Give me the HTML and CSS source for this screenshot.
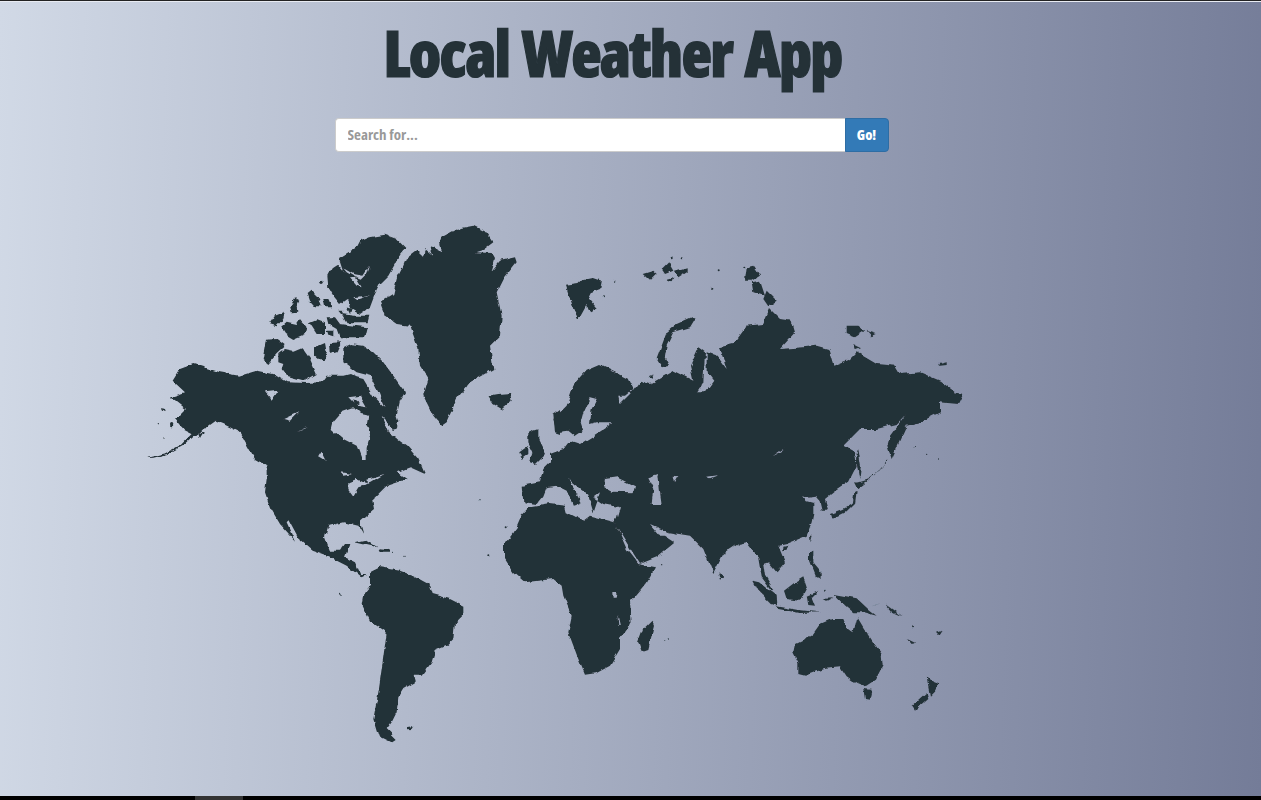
FILE: index.html
```html
<!DOCTYPE html>
<html lang="en">
<head>
<meta charset="utf-8">
<title>Local Weather App</title>
<link rel="stylesheet" href="styles.css">
</head>
<body>
<main class="page">
  <h1 class="title">Local Weather App</h1>
  <form class="search">
    <input class="search-input" type="text" placeholder="Search for...">
    <button class="search-btn" type="button">Go!</button>
  </form>
  <svg class="map" viewBox="130 220 900 530" aria-hidden="true">
    <defs>
      <filter id="rough" x="0" y="0" width="100%" height="100%" filterUnits="objectBoundingBox">
        <feTurbulence type="fractalNoise" baseFrequency="0.11" numOctaves="3" seed="4" result="n"/>
        <feDisplacementMap in="SourceGraphic" in2="n" scale="5" xChannelSelector="R" yChannelSelector="G"/>
      </filter>
    </defs>
    <g filter="url(#rough)">
    <rect x="130" y="220" width="900" height="530" fill="none"/>
    <g class="land" transform="translate(140 220) scale(.33333)">
      <path fill-rule="evenodd" d="M797,88L775,115 765,135 745,170 720,195 705,225 690,265 660,285 635,270 620,240 600,255 580,230 565,205 562,170 575,145 590,135 610,160 597,120 630,100 655,85 665,65 690,55 735,47 770,60Z M610,148L640,165 670,170 690,140 682,165 665,182 640,172 620,160Z M630,178L648,176 665,205 650,200Z M640,235L690,228 650,242Z"/>
      <path d="M800,115L830,92 850,112 855,90 880,110 870,85 905,100 900,70 905,55 950,30 1000,20 1040,40 1060,70 1030,92 1005,100 1055,102 1065,120 1055,155 1080,125 1125,115 1130,130 1090,180 1070,220 1085,290 1080,350 1050,380 1060,450 990,490 950,540 920,610 905,620 880,590 850,530 865,480 840,440 835,390 810,320 770,315 735,290 720,250 760,225 770,180 790,140Z"/>
      <path d="M388,315L405,290 435,278 430,300 410,322Z"/>
      <path d="M422,325L440,308 470,315 480,300 500,325 495,345 460,360 435,345Z"/>
      <path d="M450,262L465,238 478,245 470,262 472,278 455,280Z"/>
      <path d="M503,225L515,215 535,235 545,262 525,262 510,245Z"/>
      <path d="M550,240L565,240 575,262 555,262Z"/>
      <path d="M507,310L530,300 555,310 555,345 530,345Z"/>
      <path d="M560,295L585,295 600,315 680,325 672,358 600,358 590,330 565,315Z"/>
      <path d="M605,285L640,290 685,290 680,310 620,310Z"/>
      <path d="M620,265L640,270 630,285Z"/>
      <path d="M595,275L610,275 605,287Z"/>
      <path d="M560,335L580,335 580,355 565,350Z"/>
      <path d="M378,362L410,360 437,380 410,405 385,435 368,420Z"/>
      <path d="M415,405L435,390 460,395 485,385 510,420 530,465 495,485 440,470 425,450 430,435 415,430Z"/>
      <path d="M525,385L555,372 560,400 550,430 525,410Z"/>
      <path d="M570,372L603,370 590,400 572,405Z"/>
      <path d="M610,385L630,375 670,380 700,400 730,430 760,470 795,520 780,545 770,590 740,580 715,520 690,470 650,460 610,430Z"/>
      <path d="M1045,530L1075,525 1110,522 1115,545 1085,570 1060,555Z"/>
      <path d="M1138,700L1165,680 1165,705 1145,720Z"/>
      <path d="M1165,640L1195,630 1195,665 1215,705 1185,735 1170,730 1180,700 1165,670Z"/>
      <path d="M1240,585L1260,570 1260,645 1245,640Z"/>
      <path d="M60,567L78,570 80,577 63,572Z"/>
      <path fill-rule="evenodd" d="M120,450L160,435 240,460 300,470 350,455 400,465 440,490 500,492 545,490 560,470 590,470 610,470 630,465 650,475 670,480 700,530 730,560 770,590 775,605 770,632 755,636 745,610 725,590 745,640 800,680 835,720 855,765 810,745 770,760 800,780 740,800 730,810 700,840 705,870 660,910 670,945 655,920 610,910 565,920 555,955 570,995 600,995 615,975 628,975 615,1015 645,1030 660,1065 685,1065 660,1072 620,1040 570,1015 515,995 480,965 445,900 438,905 465,965 420,915 390,865 375,820 380,780 380,740 345,720 300,640 250,615 225,605 190,630 170,650 130,630 105,600 135,570 90,535 135,520 98,485Z M610,575L640,565 660,585 685,590 680,620 690,645 680,690 680,720 665,720 650,680 610,660 575,630 580,610Z M375,520L415,515 395,545 385,530Z M430,600L475,580 450,605Z M625,790L650,780 670,790 690,795 655,805 640,830 625,810Z M470,635L500,625 490,630Z M545,695L560,725 535,710Z M600,760L640,765 610,770Z M680,780L730,765 680,795Z M625,535L660,530 680,565 650,560Z"/>
      <path d="M640,540L660,555 645,565Z"/>
      <path d="M190,625L215,605 195,630Z"/>
      <path d="M175,645L192,640 180,660Z"/>
      <path d="M18,717L40,712 80,702 120,680 160,640 170,645 130,680 85,705 40,716Z"/>
      <circle cx="55" cy="611" r="2"/><circle cx="95" cy="617" r="5"/><circle cx="72" cy="657" r="2"/><circle cx="543" cy="190" r="5"/>
    </g>
    <g class="land" transform="translate(550 250) scale(.33333)">
      <path fill-rule="evenodd" d="M0,615L40,600 45,595 60,575 90,585 130,560 175,530 190,520 140,520 120,525 125,480 140,450 120,445 100,490 92,520 100,545 75,562 55,545 20,550 10,510 50,470 70,410 110,365 150,348 185,365 235,390 250,420 225,440 205,440 210,465 240,435 270,395 300,405 370,365 400,380 430,395 420,350 445,295 465,310 460,400 440,430 465,430 490,395 470,370 470,310 500,320 530,360 510,295 550,285 590,230 640,225 660,180 690,210 725,215 735,250 690,300 760,295 800,290 835,300 850,350 900,330 920,310 980,345 1035,350 1050,375 1110,370 1170,395 1215,430 1240,435 1225,465 1170,460 1170,490 1110,520 1070,530 1025,630 1012,590 1020,560 1068,495 1040,525 980,540 930,540 880,590 915,610 920,650 895,700 850,730 825,750 835,785 815,785 808,755 795,740 760,745 770,760 790,765 790,795 785,820 770,860 710,885 685,890 705,940 680,970 655,940 640,945 645,980 670,1020 665,1025 635,985 625,925 590,880 565,885 520,915 490,975 460,900 440,880 420,860 355,850 300,825 330,860 345,860 375,880 320,925 270,945 195,825 210,775 160,765 130,745 150,730 130,790 115,740 55,690 95,760 70,770 50,725 20,710 -10,715 -20,740 -40,765 -80,760 -85,710 -30,700 -20,660 0,640Z M160,715L165,690 200,685 255,712 250,730 185,728Z M292,685L325,675 330,730 335,765 305,765 310,720Z M665,625L700,600 708,585 695,610Z M368,680L382,682 372,700Z M468,683L505,678 480,688Z"/>
      <path d="M425,205L435,210 420,235 370,250 350,290 345,320 360,350 335,355 320,330 335,290 350,250 380,225Z"/>
      <path d="M590,55L610,50 630,80 605,95 585,95Z"/>
      <path d="M605,100L630,95 645,140 610,130Z"/>
      <path d="M650,125L680,155 655,172 640,150Z"/>
      <path d="M890,230L925,230 945,245 915,265 890,255Z"/>
      <path d="M950,245L980,255 965,262Z"/>
      <path d="M910,285L930,295 915,300Z"/>
      <path d="M1168,345L1190,340 1190,348 1170,350Z"/>
      <path d="M48,110L85,105 100,90 125,85 155,95 150,120 125,130 115,150 140,180 120,190 110,165 85,210 70,180 60,150Z"/>
      <path d="M278,75L310,65 320,75 300,95Z"/>
      <path d="M335,60L355,40 370,65 345,75Z"/>
      <path d="M375,65L410,55 410,68 385,85Z"/>
      <path d="M350,90L370,85 365,97Z"/>
      <path d="M925,600L933,650 928,690 920,640Z"/>
      <path d="M915,700L945,705 925,720Z"/>
      <circle cx="193" cy="95" r="3"/><circle cx="365" cy="25" r="3"/><circle cx="395" cy="31" r="3"/><circle cx="506" cy="64" r="3"/><circle cx="487" cy="116" r="3"/><circle cx="580" cy="53" r="3"/><circle cx="303" cy="385" r="6"/><circle cx="272" cy="405" r="6"/><circle cx="162" cy="142" r="3"/><circle cx="1090" cy="592" r="2"/><circle cx="1130" cy="616" r="2"/><circle cx="1165" cy="627" r="2"/>
      <path d="M930,715L1015,635" fill="none" stroke="#243137" stroke-width="3" stroke-dasharray="8 4"/>
    </g>
    <g class="land" transform="translate(250 480) scale(.33333)">
      <path fill-rule="evenodd" d="M840,85L900,75 945,80 950,100 1000,125 1020,110 1095,130 1130,210 1165,255 1215,265 1190,310 1140,370 1145,430 1110,480 1110,510 1080,560 1040,582 1005,587 985,540 955,460 965,410 940,350 935,320 910,300 825,310 790,280 765,240 765,190 800,145 815,110Z M1087,342L1103,342 1100,356 1088,356Z M1102,405L1110,440 1105,440Z"/>
      <path d="M1205,425L1212,440 1195,510 1175,517 1165,490 1180,450Z"/>
      <path d="M360,280L390,265 450,275 490,290 535,315 545,345 600,360 640,380 640,405 615,430 610,480 590,500 555,515 545,550 515,590 490,590 495,610 460,630 445,655 440,700 425,730 410,750 440,780 425,790 385,770 370,720 385,640 395,570 410,460 360,425 335,375 340,345 360,320Z"/>
      <path d="M315,190L345,183 380,205 350,198Z"/>
      <path d="M385,208L415,210 420,218 390,218Z"/>
      <path d="M468,745L490,741 485,750 470,751Z"/>
      <circle cx="270" cy="344" r="3"/><circle cx="715" cy="232" r="3"/><circle cx="770" cy="145" r="3"/><circle cx="690" cy="62" r="2"/><circle cx="430" cy="220" r="2"/><circle cx="462" cy="232" r="2"/>
    </g>
    <g class="land" transform="translate(640 480) scale(.33333)">
      <path d="M340,305L360,310 410,350 412,380 395,375 355,335Z"/>
      <path d="M410,382L470,392 540,400 480,402 415,390Z"/>
      <path d="M432,335L465,310 490,295 500,325 480,365 440,360Z"/>
      <path d="M500,350L535,335 515,355 525,380 505,378Z"/>
      <path d="M580,345L610,350 650,358 690,395 710,410 670,400 640,400 610,375Z"/>
      <path d="M507,220L520,215 520,250 545,280 545,300 525,290 507,245Z"/>
      <path d="M510,170L518,170 512,190Z"/>
      <path d="M575,122L570,105 610,90 635,75 640,40 650,35 645,75 620,100Z"/>
      <path d="M650,12L690,0 670,15 655,30Z"/>
      <path d="M240,278L250,295 240,302 236,290Z"/>
      <path d="M430,203L444,200 440,215 430,217Z"/>
      <path d="M465,495L515,470 540,435 575,420 610,420 620,445 640,460 652,415 670,445 700,490 725,525 728,560 705,605 675,625 650,615 620,595 600,565 550,570 495,590 475,585 475,550 460,520Z"/>
      <path d="M670,630L695,632 688,662 675,660Z"/>
      <path d="M860,590L880,610 895,615 885,635 870,650 865,625Z"/>
      <path d="M860,640L865,660 825,695 815,680Z"/>
      <path d="M735,375L785,412 755,398Z"/>
      <path d="M800,478L825,490 815,495Z"/>
      <path d="M888,458L905,452 895,467Z"/>
      <path d="M705,378L725,372 695,382Z"/>
      <path d="M545,360L580,358 560,368Z"/>
      <circle cx="822" cy="445" r="3"/><circle cx="75" cy="485" r="2"/><circle cx="88" cy="480" r="2"/><circle cx="65" cy="257" r="2"/><circle cx="555" cy="335" r="3"/>
    </g>
    </g>
  </svg>
</main>
<div class="scrollbar"><span class="thumb"></span></div>
</body>
</html>
```

FILE: styles.css
```css
* { box-sizing: border-box; }
html, body { height: 100%; }
body {
  margin: 0;
  height: 800px;
  overflow: hidden;
  display: flex;
  flex-direction: column;
  background: linear-gradient(92deg, #d1d9e6 0%, #747c98 100%);
  border-top: 1px solid #222;
  color: #243137;
  font-family: "Open Sans", "Liberation Sans", sans-serif;
}
.page {
  flex: 1;
  min-height: 0;
  display: flex;
  flex-direction: column;
  align-items: center;
  padding-right: 36px;
  border-top: 1px solid #e8ebf2;
}
.title {
  margin: 13px 0 0;
  font-size: 63px;
  line-height: 76px;
  font-weight: 800;
  font-stretch: 75%;
  letter-spacing: -1.7px;
  word-spacing: 3px;
  -webkit-text-stroke: 1.2px #243137;
}
.search {
  display: flex;
  width: 554px;
  height: 34px;
  margin-top: 27px;
  margin-left: -2px;
  flex: none;
}
.search-input {
  flex: 1;
  min-width: 0;
  padding: 0 12px 2px;
  border: 1px solid #ccc;
  border-right: 0;
  border-radius: 4px 0 0 4px;
  background: #fff;
  font-family: "Open Sans", sans-serif;
  font-size: 15px;
  font-weight: 700;
  font-stretch: 75%;
  color: #555;
}
.search-input::placeholder { color: #999; opacity: 1; }
.search-btn {
  width: 44px;
  border: 1px solid #2e6da4;
  border-radius: 0 4px 4px 0;
  background: #337ab7;
  color: #fff;
  font-family: "Open Sans", sans-serif;
  font-size: 14px;
  font-weight: 800;
  font-stretch: 75%;
  padding: 0 0 2px;
}
.map {
  display: block;
  flex: none;
  width: 900px;
  height: 530px;
  margin: 67px 0 0 -66px;
}
.land { fill: #243137; }
.scrollbar {
  flex: none;
  height: 4px;
  background: #000;
  padding-left: 195px;
}
.thumb {
  display: block;
  width: 48px;
  height: 4px;
  background: #333;
}
```
